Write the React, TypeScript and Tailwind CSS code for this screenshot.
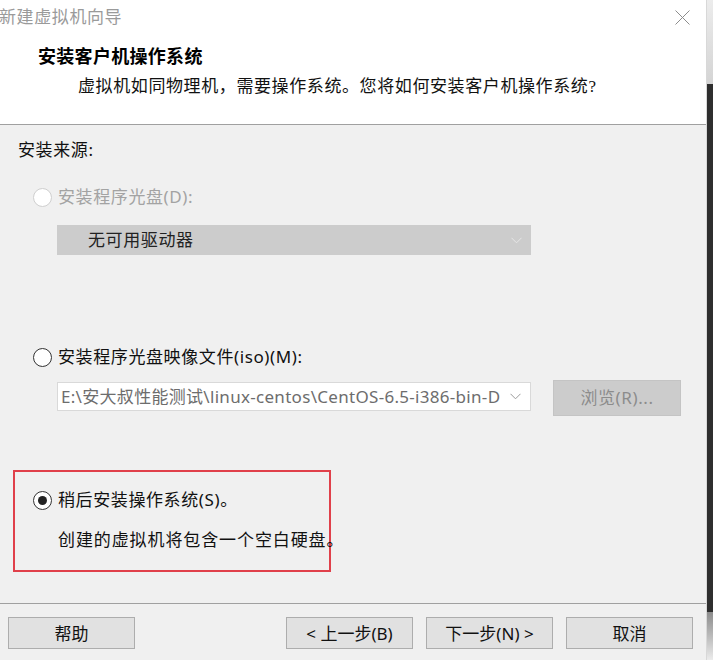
import React from "react";

function Radio({ state }: { state: "disabled" | "off" | "on" }) {
  if (state === "disabled") {
    return <div className="w-[19px] h-[19px] rounded-full border border-[#cfcfcf] bg-white shrink-0" />;
  }
  if (state === "off") {
    return <div className="w-[19px] h-[19px] rounded-full border-[1.5px] border-[#333333] bg-white shrink-0" />;
  }
  return (
    <div className="w-[19px] h-[19px] rounded-full border-[1.5px] border-[#333333] bg-white shrink-0 flex items-center justify-center">
      <div className="w-[9px] h-[9px] rounded-full bg-[#222222]" />
    </div>
  );
}

function Chevron({ color }: { color: string }) {
  return (
    <svg width="11" height="7" viewBox="0 0 11 7" className="shrink-0">
      <path d="M0.5 0.8 L5.5 5.8 L10.5 0.8" fill="none" stroke={color} strokeWidth="1" />
    </svg>
  );
}

function Btn({ children }: { children: React.ReactNode }) {
  return (
    <div className="w-[127px] h-[32px] border border-[#adadad] bg-[#e1e1e1] flex items-center justify-center text-[17px] text-[#111111] leading-none">
      {children}
    </div>
  );
}

export default function App() {
  return (
    <div className="flex w-[713px] h-[660px] overflow-hidden font-['Noto_Sans','Noto_Sans_CJK_SC',sans-serif]">
      <div className="flex flex-col w-[706px] h-full bg-[#f0f0f0]">
        {/* header */}
        <div className="bg-white h-[125px] border-b border-[#a0a0a0] flex flex-col shrink-0">
          <div className="h-[34px] flex items-center justify-between pr-[16px]">
            <span className="text-[17px] leading-[20px] text-[#9a9a9a] -ml-[1px] tracking-[0.6px]">新建虚拟机向导</span>
            <svg width="15" height="15" viewBox="0 0 15 15">
              <path d="M0.5 0.5 L14.5 14.5 M14.5 0.5 L0.5 14.5" stroke="#8c8c8c" strokeWidth="1" fill="none" />
            </svg>
          </div>
          <div className="mt-[13px] pl-[38px] text-[18px] leading-[20px] font-bold text-black font-['Liberation_Serif','Noto_Sans_CJK_SC',serif] tracking-[0.3px]">
            安装客户机操作系统
          </div>
          <div className="mt-[10px] pl-[78px] text-[17px] leading-[20px] text-[#111111] font-['Liberation_Serif','Noto_Sans_CJK_SC',serif] tracking-[0.6px] whitespace-nowrap">
            虚拟机如同物理机，需要操作系统。您将如何安装客户机操作系统?
          </div>
        </div>

        {/* body */}
        <div className="flex-1 flex flex-col pl-[18px] text-[17px] leading-[20px] tracking-[0.6px]">
          <div className="mt-[15px] text-[#111111]">安装来源:</div>

          <div className="mt-[27px] ml-[15px] flex items-center gap-[6px] h-[20px] text-[#a3a3a3]">
            <Radio state="disabled" />
            <span>安装程序光盘(D):</span>
          </div>

          <div className="mt-[18px] ml-[39px] w-[474px] h-[30px] bg-[#cccccc] flex items-center justify-between pl-[31px] pr-[9px]">
            <span className="text-[#222222]">无可用驱动器</span>
            <Chevron color="#e6e6e6" />
          </div>

          <div className="mt-[92px] ml-[15px] flex items-center gap-[6px] h-[20px] text-[#111111]">
            <Radio state="off" />
            <span>安装程序光盘映像文件(iso)(M):</span>
          </div>

          <div className="mt-[13px] ml-[39px] flex items-start">
            <div className="mt-[2px] w-[474px] h-[29px] bg-white border border-[#d9d9d9] flex items-center pl-[3px] pr-[9px] gap-[6px]">
              <span className="flex-1 min-w-0 text-[#6d6d6d] whitespace-nowrap overflow-hidden tracking-[0.3px]">E:\安大叔性能测试\linux-centos\CentOS-6.5-i386-bin-D</span>
              <Chevron color="#9a9a9a" />
            </div>
            <div className="ml-[22px] w-[128px] h-[36px] bg-[#cccccc] border border-[#c4c4c4] flex items-center justify-center text-[#8c8c8c]">
              浏览(R)...
            </div>
          </div>

          <div className="mt-[54px] -ml-[5px] w-[318px] h-[102px] border-2 border-[#e0404a] pt-[18px] pl-[18px] flex flex-col">
            <div className="flex items-center gap-[6px] h-[20px] text-[#111111] whitespace-nowrap">
              <Radio state="on" />
              <span>稍后安装操作系统(S)。</span>
            </div>
            <div className="mt-[20px] pl-[25px] text-[#111111] whitespace-nowrap tracking-[0.9px]">创建的虚拟机将包含一个空白硬盘。</div>
          </div>
        </div>

        {/* footer */}
        <div className="h-[57px] border-t border-[#a0a0a0] flex items-start pt-[13px] pl-[8px] pr-[13px] shrink-0">
          <Btn>帮助</Btn>
          <div className="ml-auto flex gap-[13px]">
            <Btn>&lt; 上一步(B)</Btn>
            <Btn>下一步(N) &gt;</Btn>
            <Btn>取消</Btn>
          </div>
        </div>
      </div>

      {/* background strip on the right */}
      <div className="w-[7px] flex flex-col border-l border-[#d8d8d8]">
        <div className="h-[84px] bg-gradient-to-b from-[#ececec] to-[#d4d4d4]" />
        <div className="h-[528px] bg-[#2e2e2e]" />
        <div className="flex-1 bg-gradient-to-b from-[#8c8c8c] to-[#ececec]" />
      </div>
    </div>
  );
}
